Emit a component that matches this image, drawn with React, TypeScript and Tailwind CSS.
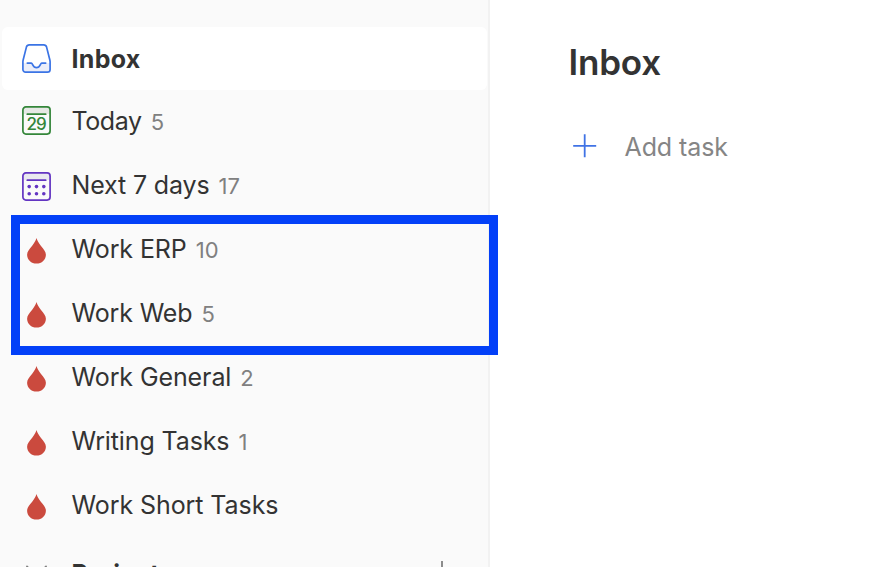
import React from 'react';

type NavItem = {
  label: string;
  count?: number;
  icon: React.ReactNode;
  tracking: string;
};

const InboxIcon: React.FC = () => (
  <svg className="h-[29px] w-[29px]" viewBox="0 0 29 29" fill="none">
    <path d="M1 19h8.500c1.500 0 1.500 4.700 5 4.700s3.500-4.700 5-4.700H28v6a3 3 0 0 1-3 3H4a3 3 0 0 1-3-3z" fill="#ebeef9" />
    <path
      d="M7.300.9h14.400c1.400 0 2.500.8 2.900 2.200l3.200 12.700c.2.800.3 1.500.3 2.300v7.300a2.700 2.700 0 0 1-2.700 2.700H3.600a2.700 2.700 0 0 1-2.700-2.700v-7.300c0-.8.1-1.500.3-2.300L4.400 3.100C4.800 1.700 5.900.9 7.300.9z"
      stroke="#3b74e5"
      strokeWidth="1.700"
    />
    <path
      d="M5.300 19.100h4c1.500 0 1.300 4.500 5.200 4.500s3.700-4.500 5.200-4.500h4"
      stroke="#3b74e5"
      strokeWidth="1.700"
      strokeLinecap="round"
    />
  </svg>
);

const TodayIcon: React.FC = () => (
  <svg className="h-[29px] w-[29px]" viewBox="0 0 29 29" fill="none">
    <path d="M1 8V4a3 3 0 0 1 3-3h21a3 3 0 0 1 3 3v4z" fill="#e6e8e5" />
    <rect x=".9" y=".9" width="27.200" height="27.200" rx="3" stroke="#34863a" strokeWidth="1.700" />
    <path d="M5.300 8.200h18.400" stroke="#34863a" strokeWidth="1.700" strokeLinecap="round" />
    <text
      x="4.600"
      y="23.800"
      fontSize="17"
      fontWeight="500"
      fontFamily="Inter, sans-serif"
      textLength="20"
      fill="#34863a"
    >
      29
    </text>
  </svg>
);

const WeekIcon: React.FC = () => (
  <svg className="h-[29px] w-[29px]" viewBox="0 0 29 29" fill="none">
    <path d="M1 8V4a3 3 0 0 1 3-3h21a3 3 0 0 1 3 3v4z" fill="#e9e9ef" />
    <rect x=".9" y=".9" width="27.200" height="27.200" rx="3" stroke="#6335c2" strokeWidth="1.700" />
    <path d="M5.300 8.200h18.400" stroke="#6335c2" strokeWidth="1.700" strokeLinecap="round" />
    <g fill="#6335c2">
      <circle cx="7.200" cy="14.600" r="1.800" />
      <circle cx="14.500" cy="14.600" r="1.800" />
      <circle cx="21.800" cy="14.600" r="1.800" />
      <circle cx="7.200" cy="21.800" r="1.800" />
      <circle cx="14.500" cy="21.800" r="1.800" />
      <circle cx="21.800" cy="21.800" r="1.800" />
    </g>
  </svg>
);

const DropIcon: React.FC = () => (
  <svg className="mt-1 h-[26px] w-[29px]" viewBox="0 0 29 26">
    <path
      d="M14.500 0C15.300 2.700 16.600 4.900 19 8c2.600 3.200 4.900 5.600 4.900 8.700 0 5-4.200 8.900-9.400 8.900s-9.400-3.900-9.400-8.900C5.100 13.600 7.400 11.200 10 8c2.400-3.100 3.700-5.300 4.500-8z"
      fill="#cb4a3e"
    />
  </svg>
);

const filters: NavItem[] = [
  { label: 'Next 7 days', count: 17, icon: <span className="mt-0.5"><WeekIcon /></span>, tracking: 'tracking-[-0.15px]' },
  { label: 'Work ERP', count: 10, icon: <DropIcon />, tracking: 'tracking-[-0.1px]' },
  { label: 'Work Web', count: 5, icon: <DropIcon />, tracking: 'tracking-[-0.15px]' },
  { label: 'Work General', count: 2, icon: <DropIcon />, tracking: 'tracking-[-0.1px]' },
  { label: 'Writing Tasks', count: 1, icon: <DropIcon />, tracking: 'tracking-[-0.12px]' },
  { label: 'Work Short Tasks', icon: <DropIcon />, tracking: 'tracking-[-0.08px]' },
];

const NavRow: React.FC<{ item: NavItem }> = ({ item }) => (
  <li className="flex h-16 items-center pl-[22px]">
    <span className="flex h-[31px] w-[29px] shrink-0">{item.icon}</span>
    <span className={`ml-[20.5px] whitespace-nowrap text-[25px] leading-8 ${item.tracking}`}>{item.label}</span>
    {item.count !== undefined && (
      <span className="ml-[9px] mt-0.5 text-[22px] leading-8 tracking-[0.2px] text-[#808080]">{item.count}</span>
    )}
  </li>
);

const Sidebar: React.FC = () => (
  <aside className="h-full w-[490px] shrink-0 overflow-hidden border-r-2 border-[#f2f2f2] bg-[#fafafa] pt-[27px]">
    <div className="mx-0.5 mr-px flex h-[63px] items-center rounded-md bg-white pl-5">
      <InboxIcon />
      <span className="ml-[20.5px] text-[25px] font-bold leading-8 tracking-[0.3px]">Inbox</span>
    </div>
    <ul>
      <li className="flex h-[63px] items-center pb-0.5 pl-[22px]">
        <TodayIcon />
        <span className="ml-[20.5px] text-[25px] leading-8 tracking-[-0.4px]">Today</span>
        <span className="ml-[9px] mt-0.5 text-[22px] leading-8 text-[#808080]">5</span>
      </li>
      {filters.map((item) => (
        <NavRow key={item.label} item={item} />
      ))}
    </ul>
    <div className="mt-[21px] flex h-[60px] items-start pl-[22px]">
      <svg className="mt-1.5 h-[29px] w-[29px]" viewBox="0 0 29 29" fill="none">
        <path d="M5 2.500l9.500 9.500L24 2.500" stroke="#808080" strokeWidth="1.800" strokeLinecap="round" />
      </svg>
      <span className="ml-[20.5px] text-[25px] font-bold leading-8 tracking-[0.2px]">Projects</span>
      <svg className="ml-auto mr-[34px] mt-0.5 h-6 w-6" viewBox="0 0 24 24" fill="none">
        <path d="M12 1v22M1 12h22" stroke="#808080" strokeWidth="1.800" />
      </svg>
    </div>
  </aside>
);

export default function App() {
  return (
    <div className="relative flex h-[567px] w-[880px] overflow-hidden bg-white font-[Inter,sans-serif] text-[#333333]">
      <Sidebar />
      <main className="flex-1 pl-[78.500px] pt-[42px]">
        <h1 className="text-[35px] font-semibold leading-10 tracking-[-0.2px]">Inbox</h1>
        <button className="mt-11 flex items-center text-[25px] leading-10 text-[#858585]">
          <svg className="mb-0.5 ml-1 h-6 w-6" viewBox="0 0 24 24" fill="none">
            <path d="M11.700.3v23M.2 11.800h23" stroke="#4073e5" strokeWidth="1.800" />
          </svg>
          <span className="ml-7 mt-px tracking-[-0.1px]">Add task</span>
        </button>
      </main>
      <div className="absolute left-[11px] top-[215px] h-[140px] w-[487px] border-9 border-[#0340f8]" />
    </div>
  );
}
